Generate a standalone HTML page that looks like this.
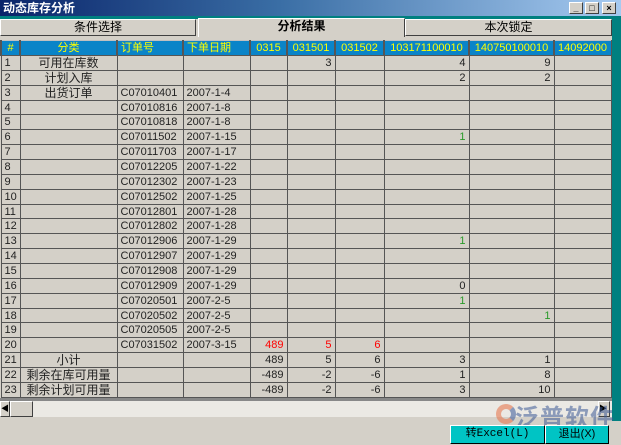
<!DOCTYPE html>
<html><head><meta charset="utf-8"><style>
*{margin:0;padding:0;box-sizing:border-box}
body{width:621px;height:445px;overflow:hidden;background:#d4d0c8;font-family:"Liberation Sans","Noto Sans CJK SC","WenQuanYi Zen Hei",sans-serif;position:relative;font-size:11px;color:#000}
.title{position:absolute;left:0;top:0;width:621px;height:16px;background:linear-gradient(90deg,#0a246a 0%,#3a6ea5 45%,#a6caf0 100%);color:#fff;font-weight:bold;font-size:12px;line-height:16px;padding-left:3px}
.tb{position:absolute;top:2px;width:14px;height:12px;background:#d4d0c8;border:1px solid;border-color:#fff #404040 #404040 #fff;font-size:9px;line-height:10px;text-align:center;color:#000;font-weight:bold}
.teal{position:absolute;background:#008080}
.tab{position:absolute;top:19px;height:17px;border:1px solid;border-color:#fff #404040 #404040 #fff;text-align:center;line-height:15px;font-size:12px;background:#d4d0c8}
table{position:absolute;left:0;top:40px;border-collapse:collapse;table-layout:fixed;width:610px}
td{border:1px solid #555;height:14.87px;padding:0 3px;white-space:nowrap;overflow:hidden;font-size:11px;line-height:12px;color:#222}
tr.h td{background:#0a84c8;color:#ffff00;height:15px;border-color:#c0c0c0 #555 #555 #fff;border-left:2px solid #555}
.c{text-align:center}.r{text-align:right}.g{color:#2a9a2a}.red{color:#f00}
td.cat{text-align:center;font-size:12px}
</style></head><body>
<div class="title">动态库存分析</div>
<div class="tb" style="left:569px">_</div><div class="tb" style="left:585px">□</div><div class="tb" style="left:602px">×</div>
<div class="teal" style="left:0;top:16px;width:621px;height:3px"></div>
<div class="teal" style="left:612px;top:16px;width:9px;height:405px"></div>
<div class="tab" style="left:0;width:196px">条件选择</div>
<div class="tab" style="left:198px;width:207px;top:18px;height:19px;font-weight:bold;border-bottom:none">分析结果</div>
<div class="tab" style="left:405px;width:207px">本次锁定</div>
<table>
<colgroup><col style="width:19px"><col style="width:97px"><col style="width:66px"><col style="width:67px"><col style="width:37px"><col style="width:48px"><col style="width:49px"><col style="width:85px"><col style="width:85px"><col style="width:57px"></colgroup>
<tr class="h"><td class="c">#</td><td class="c">分类</td><td>订单号</td><td>下单日期</td><td class="c">0315</td><td class="c">031501</td><td class="c">031502</td><td class="c">103171100010</td><td class="c">140750100010</td><td>14092000</td></tr>
<tr><td>1</td><td class="cat">可用在库数</td><td></td><td></td><td></td><td class="r">3</td><td></td><td class="r">4</td><td class="r">9</td><td></td></tr>
<tr><td>2</td><td class="cat">计划入库</td><td></td><td></td><td></td><td></td><td></td><td class="r">2</td><td class="r">2</td><td></td></tr>
<tr><td>3</td><td class="cat">出货订单</td><td>C07010401</td><td>2007-1-4</td><td></td><td></td><td></td><td></td><td></td><td></td></tr>
<tr><td>4</td><td></td><td>C07010816</td><td>2007-1-8</td><td></td><td></td><td></td><td></td><td></td><td></td></tr>
<tr><td>5</td><td></td><td>C07010818</td><td>2007-1-8</td><td></td><td></td><td></td><td></td><td></td><td></td></tr>
<tr><td>6</td><td></td><td>C07011502</td><td>2007-1-15</td><td></td><td></td><td></td><td class="r g">1</td><td></td><td></td></tr>
<tr><td>7</td><td></td><td>C07011703</td><td>2007-1-17</td><td></td><td></td><td></td><td></td><td></td><td></td></tr>
<tr><td>8</td><td></td><td>C07012205</td><td>2007-1-22</td><td></td><td></td><td></td><td></td><td></td><td></td></tr>
<tr><td>9</td><td></td><td>C07012302</td><td>2007-1-23</td><td></td><td></td><td></td><td></td><td></td><td></td></tr>
<tr><td>10</td><td></td><td>C07012502</td><td>2007-1-25</td><td></td><td></td><td></td><td></td><td></td><td></td></tr>
<tr><td>11</td><td></td><td>C07012801</td><td>2007-1-28</td><td></td><td></td><td></td><td></td><td></td><td></td></tr>
<tr><td>12</td><td></td><td>C07012802</td><td>2007-1-28</td><td></td><td></td><td></td><td></td><td></td><td></td></tr>
<tr><td>13</td><td></td><td>C07012906</td><td>2007-1-29</td><td></td><td></td><td></td><td class="r g">1</td><td></td><td></td></tr>
<tr><td>14</td><td></td><td>C07012907</td><td>2007-1-29</td><td></td><td></td><td></td><td></td><td></td><td></td></tr>
<tr><td>15</td><td></td><td>C07012908</td><td>2007-1-29</td><td></td><td></td><td></td><td></td><td></td><td></td></tr>
<tr><td>16</td><td></td><td>C07012909</td><td>2007-1-29</td><td></td><td></td><td></td><td class="r">0</td><td></td><td></td></tr>
<tr><td>17</td><td></td><td>C07020501</td><td>2007-2-5</td><td></td><td></td><td></td><td class="r g">1</td><td></td><td></td></tr>
<tr><td>18</td><td></td><td>C07020502</td><td>2007-2-5</td><td></td><td></td><td></td><td></td><td class="r g">1</td><td></td></tr>
<tr><td>19</td><td></td><td>C07020505</td><td>2007-2-5</td><td></td><td></td><td></td><td></td><td></td><td></td></tr>
<tr><td>20</td><td></td><td>C07031502</td><td>2007-3-15</td><td class="r red">489</td><td class="r red">5</td><td class="r red">6</td><td></td><td></td><td></td></tr>
<tr><td>21</td><td class="cat">小计</td><td></td><td></td><td class="r">489</td><td class="r">5</td><td class="r">6</td><td class="r">3</td><td class="r">1</td><td></td></tr>
<tr><td>22</td><td class="cat">剩余在库可用量</td><td></td><td></td><td class="r">-489</td><td class="r">-2</td><td class="r">-6</td><td class="r">1</td><td class="r">8</td><td></td></tr>
<tr><td>23</td><td class="cat">剩余计划可用量</td><td></td><td></td><td class="r">-489</td><td class="r">-2</td><td class="r">-6</td><td class="r">3</td><td class="r">10</td><td></td></tr>
</table>
<div style="position:absolute;left:0;top:398px;width:612px;height:3px;background:#888"></div>
<div style="position:absolute;left:0;top:401px;width:612px;height:16px;background:#ebe9e4"></div>
<div style="position:absolute;left:0;top:401px;width:10px;height:16px;background:#d4d0c8;border:1px solid;border-color:#fff #404040 #404040 #fff;font-size:8px;line-height:14px">◀</div>
<div style="position:absolute;left:10px;top:401px;width:23px;height:16px;background:#d4d0c8;border:1px solid;border-color:#fff #404040 #404040 #fff"></div>
<div style="position:absolute;left:598px;top:401px;width:12px;height:16px;background:#d4d0c8;border:1px solid;border-color:#fff #404040 #404040 #fff;font-size:8px;line-height:14px">▶</div>
<div style="position:absolute;left:515px;top:398px;font-size:24px;color:rgba(60,90,150,0.55);letter-spacing:1px;font-weight:bold">泛普软件</div>
<div style="position:absolute;left:496px;top:404px;width:20px;height:20px;border-radius:50%;border:5px solid rgba(230,120,80,0.6);border-right-color:rgba(70,100,160,0.6)"></div>
<div style="position:absolute;left:450px;top:425px;width:95px;height:19px;background:#00c4c4;border:1px solid;border-color:#fff #000 #000 #fff;text-align:center;line-height:17px;font-size:11px;font-family:'Liberation Mono','Noto Sans CJK SC',monospace">转Excel(L)</div>
<div style="position:absolute;left:545px;top:425px;width:64px;height:19px;background:#00c4c4;border:1px solid;border-color:#fff #000 #000 #fff;text-align:center;line-height:17px;font-size:11px">退出(X)</div>
</body></html>
